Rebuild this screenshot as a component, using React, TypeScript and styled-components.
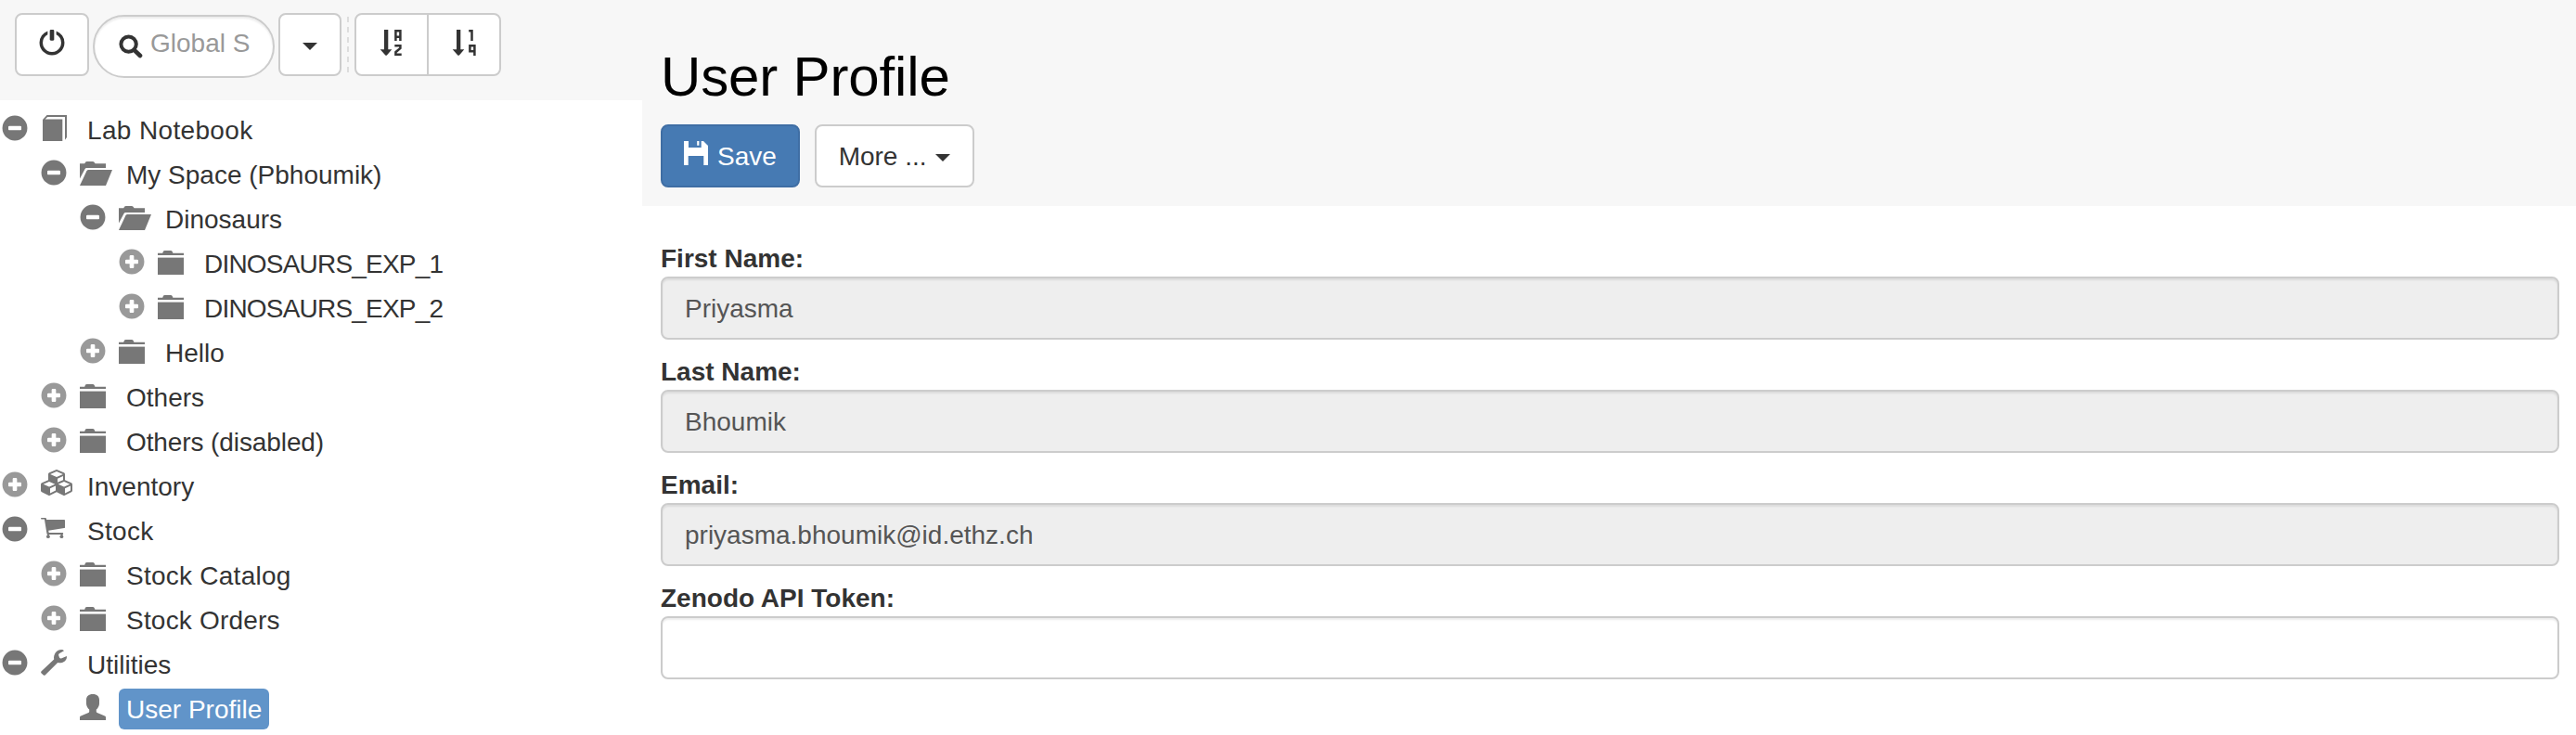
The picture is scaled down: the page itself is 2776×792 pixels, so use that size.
import React from 'react';
import styled, { createGlobalStyle, css } from 'styled-components';

const GlobalStyle = createGlobalStyle`
  *, *::before, *::after { box-sizing: border-box; }
  body {
    margin: 0;
    background: #fff;
    color: #333;
    font-family: "Liberation Sans", Arial, sans-serif;
    font-size: 28px;
    line-height: 40px;
  }
  button, input { font: inherit; color: inherit; margin: 0; }
`;

const Page = styled.div`
  display: grid;
  grid-template-columns: 692px 1fr;
  height: 792px;
  overflow: hidden;
`;

const Sidebar = styled.aside`
  display: flex;
  flex-direction: column;
`;

const Toolbar = styled.div`
  display: flex;
  align-items: flex-start;
  height: 108px;
  padding: 14px 16px;
  background: #f7f7f7;
`;

const Button = styled.button<{ $primary?: boolean; $width: number }>`
  display: inline-flex;
  align-items: center;
  justify-content: center;
  width: ${(p) => p.$width}px;
  height: 68px;
  padding: 0;
  border: 2px solid ${(p) => (p.$primary ? '#3f6ea4' : '#ccc')};
  border-radius: 8px;
  background: ${(p) => (p.$primary ? '#467ab3' : '#fff')};
  color: ${(p) => (p.$primary ? '#fff' : '#333')};
`;

const ButtonText = styled.span`
  padding-top: 2px;
  white-space: pre;
`;

const fieldBox = css`
  height: 68px;
  border: 2px solid #ccc;
  box-shadow: inset 0 2px 2px rgba(0, 0, 0, 0.075);
`;

const SearchBox = styled.label`
  ${fieldBox}
  display: flex;
  align-items: center;
  width: 196px;
  margin: 2px 4px 0;
  padding-left: 26px;
  border-radius: 34px;
  background: #fff;
`;

const SearchInput = styled.input`
  width: 110px;
  height: 40px;
  margin: 0 0 6px 8px;
  padding: 0;
  border: 0;
  outline: 0;
  background: transparent;
  &::placeholder { color: #999; opacity: 1; }
`;

const SearchIcon = styled.svg`
  width: 26px;
  height: 26px;
  filter: blur(0.5px);
`;

const Separator = styled.div`
  width: 2px;
  height: 60px;
  margin: 4px 6px 0;
  background: repeating-linear-gradient(#ddd 0 6px, transparent 6px 10.8px);
`;

const ButtonGroup = styled.div`
  display: flex;
  ${Button}:first-child { border-radius: 8px 0 0 8px; }
  ${Button}:last-child { margin-left: -2px; border-radius: 0 8px 8px 0; }
`;

const Caret = styled.span<{ $gap?: number }>`
  border: 8px solid transparent;
  border-top-color: currentColor;
  border-bottom-width: 0;
  margin-top: 4px;
  margin-left: ${(p) => p.$gap ?? 0}px;
`;

const Glyph = styled.svg`
  flex: none;
  height: 28px;
  margin-bottom: 4px;
  fill: currentColor;
  overflow: visible;
`;

const Tree = styled.ul`
  margin: 0;
  padding: 8px 0 0 2px;
  list-style: none;
`;

const Row = styled.li<{ $level: number }>`
  display: grid;
  grid-template-columns: 42px 42px auto;
  justify-content: start;
  align-items: center;
  height: 48px;
  padding-left: ${(p) => p.$level * 42}px;
`;

const Expander = styled.span<{ $open?: boolean }>`
  display: flex;
  color: ${(p) => (p.$open ? '#777' : '#999')};
`;

const NodeIcon = styled.span`
  display: flex;
  color: #777;
`;

const NodeTitle = styled.span<{ $active?: boolean; $tracking?: number }>`
  height: 44px;
  padding: 0 8px;
  line-height: 46px;
  letter-spacing: ${(p) => p.$tracking ?? 0}px;
  white-space: nowrap;
  border-radius: 6px;
  background: ${(p) => (p.$active ? '#6194c9' : 'transparent')};
  color: ${(p) => (p.$active ? '#fff' : '#333')};
`;

const Main = styled.main`
  display: flex;
  flex-direction: column;
`;

const Header = styled.header`
  height: 222px;
  padding: 50px 20px 0;
  background: #f7f7f7;
`;

const Title = styled.h1`
  margin: 0 0 18px;
  color: #000;
  font-size: 60px;
  font-weight: 400;
  line-height: 66px;
  letter-spacing: -0.15px;
`;

const Actions = styled.div`
  display: flex;
  gap: 16px;
`;

const Form = styled.form`
  display: flex;
  flex-direction: column;
  gap: 14px;
  padding: 36px 18px 0 20px;
`;

const Field = styled.label`
  display: flex;
  flex-direction: column;
`;

const FieldLabel = styled.span`
  height: 40px;
  line-height: 42px;
  font-weight: 700;
`;

const FieldInput = styled.input`
  ${fieldBox}
  width: 100%;
  padding: 2px 24px 0;
  border-radius: 8px;
  background: #fff;
  color: #555;
  &:disabled { background: #eee; -webkit-text-fill-color: #555; }
`;

const DISC =
  'M600 1177q117 0 224-45.5t184.5-123t123-184.5t45.5-224t-45.5-224t-123-184.5t-184.5-123t-224-45.5t-224 45.5t-184.5 123t-123 184.5t-45.5 224t45.5 224t123 184.5t184.5 123t224 45.5z';
const PLUS =
  'M650 900h-100q-21 0-35.5-14.5t-14.5-35.5v-150h-150q-21 0-35.5-14.5t-14.5-35.5v-100q0-21 14.5-35.5t35.5-14.5h150v-150q0-21 14.5-35.5t35.5-14.5h100q21 0 35.5 14.5t14.5 35.5v150h150q21 0 35.5 14.5t14.5 35.5v100q0 21-14.5 35.5t-35.5 14.5h-150v150q0 21-14.5 35.5t-35.5 14.5z';
const MINUS =
  'M850 700h-500q-21 0-35.5-14.5t-14.5-35.5v-100q0-21 14.5-35.5t35.5-14.5h500q21 0 35.5 14.5t14.5 35.5v100q0 21-14.5 35.5t-35.5 14.5z';
const POWER =
  'M550 1200h100q21 0 35.5-14.5t14.5-35.5v-400q0-21-14.5-35.5t-35.5-14.5h-100q-21 0-35.5 14.5t-14.5 35.5v400q0 21 14.5 35.5t35.5 14.5zM800 975v166q167-62 272-209.5t105-331.5q0-117-45.5-224t-123-184.5t-184.5-123t-224-45.5t-224 45.5t-184.5 123t-123 184.5t-45.5 224q0 184 105 331.5t272 209.5v-166q-103-55-165-155t-62-220q0-116 57-214.5t155.5-155.5t214.5-57t214.5 57t155.5 155.5t57 214.5q0 120-62 220t-165 155z';

const FontGlyph = ({ d }: { d: string }) => (
  <Glyph width="28" viewBox="0 0 1200 1200">
    <path fillRule="evenodd" transform="translate(0 1200) scale(1 -1)" d={d} />
  </Glyph>
);

const icons = {
  book: <path d="M2 5L6.5 0H28V24L26 26.8V2H7.2L4.6 4.4H23.3V28H2z" />,
  open: (
    <>
      <path d="M5.2 4.2L6.3 2.4Q6.8 2 7.6 2H14Q14.8 2 15.3 2.6L16.6 4.2H28V9H7.2Q6.2 9 5.6 10L0 20.5V4.2z" />
      <path d="M9.6 11H35L28 28H0L7.4 12.2Q8 11 9.6 11z" />
    </>
  ),
  folder: (
    <>
      <path d="M0 4.7H5.2L6 2.8Q6.5 2 7.6 2H14Q15 2 15.5 2.8L16.4 4.7H28V7H0z" />
      <path d="M0 9.6H28V28H0z" />
    </>
  ),
  cubes: (
    <path
      transform="translate(0 -2) scale(0.015625)"
      d="M640 1632l384-192v-314l-384 164v342zm-64-454l404-173-404-173-404 173zm1088 454l384-192v-314l-384 164v342zm-64-454l404-173-404-173-404 173zm-448-293l384-165v-266l-384 164v267zm-64-379l441-189-441-189-441 189zm1088 518v416q0 36-19 67t-52 47l-448 224q-25 14-57 14t-57-14l-448-224q-4-2-7-4-2 2-7 4l-448 224q-25 14-57 14t-57-14l-448-224q-33-16-52-47t-19-67v-416q0-38 21.5-70t56.5-48l434-186v-400q0-38 21.5-70t56.5-48l448-192q23-10 50-10t50 10l448 192q35 16 56.5 48t21.5 70v400l434 186q36 16 57 48t21 70z"
    />
  ),
  cart: (
    <>
      <path d="M.7 2H5Q5.7 2 5.9 2.7L6.2 4H25.2Q26 4 26 4.8V12.2Q26 13 25.2 13.1L8.2 15.7L8.7 18H23.4Q24.2 18 24.2 19T23.4 20H7.4Q6.7 20 6.5 19.2L3.9 3.6H.7Q0 3.6 0 2.8T.7 2z" />
      <path d="M7.2 19H8.8V21H7.2zM21.8 19H23.4V21H21.8z" />
      <circle cx="7.9" cy="22.2" r="1.9" />
      <circle cx="22.4" cy="22.2" r="1.9" />
    </>
  ),
  wrench: (
    <path d="M.4 23.4L14.2 10.6C13.2 4.6 17.4.1 22.2 0Q24 0 25 1.2L19.8 4.2Q18.8 5 19.2 6.2L20 8.6Q20.6 9.7 22 9.5L27.9 6.9C28.4 11.6 24.4 15 18.2 14L4.6 27.4Q3.6 28.3 2.6 27.3L.4 25.2Q-.2 24.3 .4 23.4z" />
  ),
  user: (
    <path d="M14 0C18.6 0 21 2.4 21 6.2V10C21 12.6 19.6 15.2 17.8 16.5V18.8Q17.8 19.7 18.7 20.1L27 23.6Q28 24.1 28 25V28H0V25Q0 24.1 1 23.6L9.3 20.1Q10.2 19.7 10.2 18.8V16.5C8.4 15.2 7 12.6 7 10V6.2C7 2.4 9.4 0 14 0z" />
  ),
};

interface TreeNode {
  level: number;
  state?: 'open' | 'closed';
  icon: keyof typeof icons;
  label: string;
  active?: boolean;
  tracking?: number;
}

const nodes: TreeNode[] = [
  { level: 0, state: 'open', icon: 'book', label: 'Lab Notebook', tracking: 0.35 },
  { level: 1, state: 'open', icon: 'open', label: 'My Space (Pbhoumik)' },
  { level: 2, state: 'open', icon: 'open', label: 'Dinosaurs' },
  { level: 3, state: 'closed', icon: 'folder', label: 'DINOSAURS_EXP_1', tracking: -0.8 },
  { level: 3, state: 'closed', icon: 'folder', label: 'DINOSAURS_EXP_2', tracking: -0.8 },
  { level: 2, state: 'closed', icon: 'folder', label: 'Hello' },
  { level: 1, state: 'closed', icon: 'folder', label: 'Others' },
  { level: 1, state: 'closed', icon: 'folder', label: 'Others (disabled)', tracking: -0.1 },
  { level: 0, state: 'closed', icon: 'cubes', label: 'Inventory' },
  { level: 0, state: 'open', icon: 'cart', label: 'Stock', tracking: 0.3 },
  { level: 1, state: 'closed', icon: 'folder', label: 'Stock Catalog', tracking: 0.25 },
  { level: 1, state: 'closed', icon: 'folder', label: 'Stock Orders', tracking: 0.2 },
  { level: 0, state: 'open', icon: 'wrench', label: 'Utilities' },
  { level: 1, icon: 'user', label: 'User Profile', active: true },
];

const fields = [
  { label: 'First Name:', value: 'Priyasma', disabled: true },
  { label: 'Last Name:', value: 'Bhoumik', disabled: true },
  { label: 'Email:', value: 'priyasma.bhoumik@id.ethz.ch', disabled: true },
  { label: 'Zenodo API Token:', value: '', disabled: false },
];

const SortArrow = () => <path d="M6 0H10.3V21.3H14.3L8.9 27.4Q8.1 28.2 7.3 27.4L1.7 21.3H6z" />;

export default function App() {
  return (
    <>
      <GlobalStyle />
      <Page>
        <Sidebar>
          <Toolbar>
            <Button $width={80} aria-label="Log out">
              <FontGlyph d={POWER} />
            </Button>
            <SearchBox>
              <SearchIcon viewBox="0 0 26 26" fill="none" stroke="#333">
                <circle cx="10.6" cy="10.6" r="8.2" strokeWidth="4" />
                <path d="M16.6 16.8L23 23" strokeWidth="4.6" strokeLinecap="round" />
              </SearchIcon>
              <SearchInput placeholder="Global S" />
            </SearchBox>
            <Button $width={68} aria-label="Search options">
              <Caret />
            </Button>
            <Separator />
            <ButtonGroup>
              <Button $width={80} aria-label="Sort alphabetically">
                <Glyph width="28" viewBox="0 0 28 28">
                  <SortArrow />
                  <path
                    d="M18.4 12V1.3H23.4V12M18.4 7.7H23.4M17.3 17.3H23.4V20L18.4 24.2V26.7H24.7"
                    fill="none"
                    stroke="currentColor"
                    strokeWidth="2.5"
                  />
                </Glyph>
              </Button>
              <Button $width={80} aria-label="Sort by order">
                <Glyph width="28" viewBox="0 0 28 28">
                  <SortArrow />
                  <path
                    d="M19.2 1.3H22.5V12M25.4 23.2H20.4V17.3H25.4V28"
                    fill="none"
                    stroke="currentColor"
                    strokeWidth="2.5"
                  />
                </Glyph>
              </Button>
            </ButtonGroup>
          </Toolbar>
          <Tree>
            {nodes.map((n) => (
              <Row key={n.label} $level={n.level}>
                <Expander $open={n.state === 'open'}>
                  {n.state && <FontGlyph d={DISC + (n.state === 'open' ? MINUS : PLUS)} />}
                </Expander>
                <NodeIcon>
                  <Glyph width="28" viewBox="0 0 28 28">
                    {icons[n.icon]}
                  </Glyph>
                </NodeIcon>
                <NodeTitle $active={n.active} $tracking={n.tracking}>
                  {n.label}
                </NodeTitle>
              </Row>
            ))}
          </Tree>
        </Sidebar>
        <Main>
          <Header>
            <Title>User Profile</Title>
            <Actions>
              <Button $primary $width={150}>
                <Glyph width="28" viewBox="0 0 28 28">
                  <path d="M0 0H5V7H18.7V0H21L26 5V26H21.3V16H4.7V26H0zM14.2 0H16.4V4.7H14.2z" />
                </Glyph>
                <ButtonText> Save</ButtonText>
              </Button>
              <Button $width={172}>
                <ButtonText>{'More ... '}</ButtonText>
                <Caret $gap={2} />
              </Button>
            </Actions>
          </Header>
          <Form>
            {fields.map((f) => (
              <Field key={f.label}>
                <FieldLabel>{f.label}</FieldLabel>
                <FieldInput defaultValue={f.value} disabled={f.disabled} />
              </Field>
            ))}
          </Form>
        </Main>
      </Page>
    </>
  );
}
